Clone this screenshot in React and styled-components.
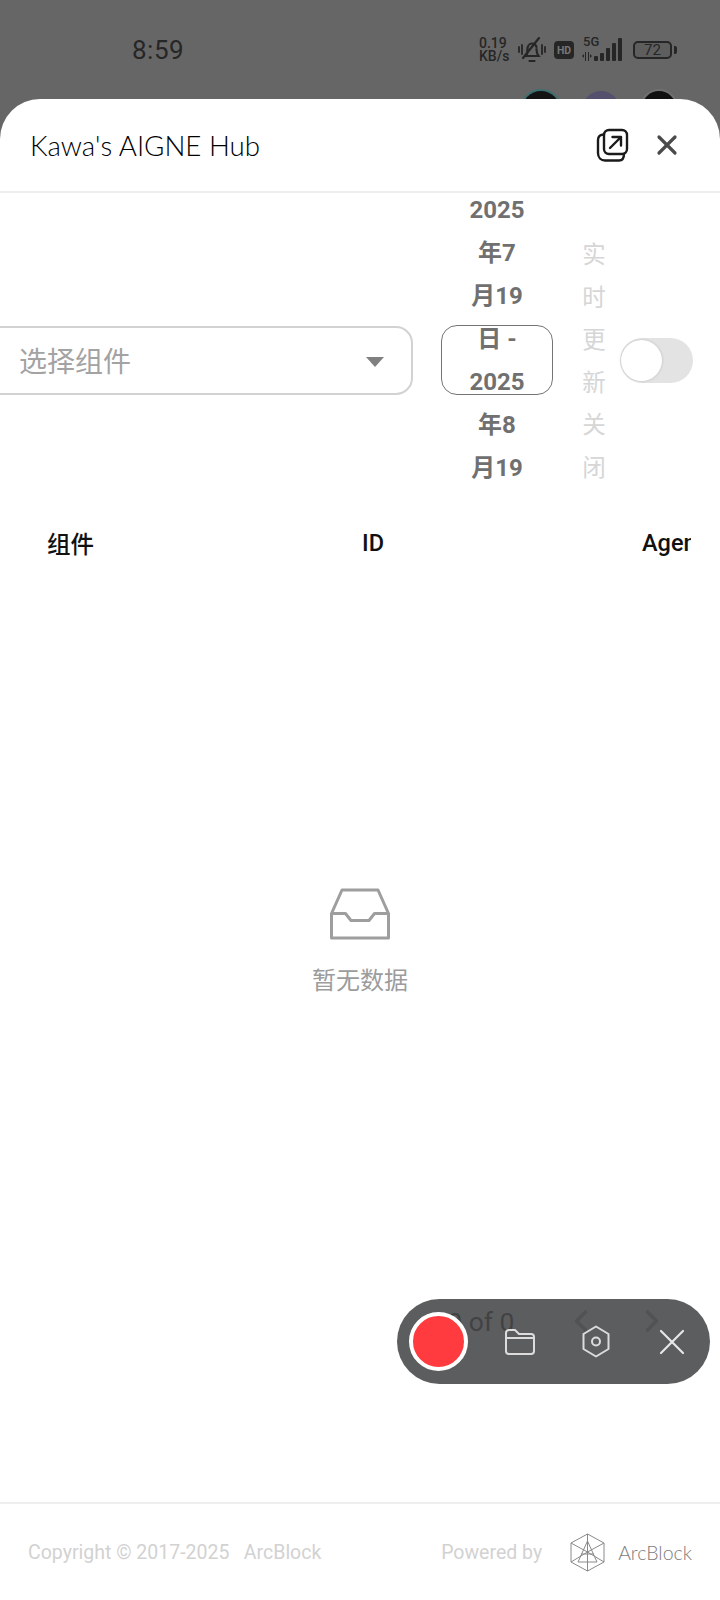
import React from 'react';
import styled, { createGlobalStyle } from 'styled-components';
import { X, ChevronLeft, ChevronRight } from 'lucide-react';

const GlobalStyle = createGlobalStyle`
  html, body {
    margin: 0;
    padding: 0;
    background: #666;
  }
  body {
    font-family: Roboto, "Noto Sans CJK SC", sans-serif;
  }
`;

const Page = styled.div`
  position: relative;
  width: 720px;
  height: 1600px;
  overflow: hidden;
  display: flex;
  flex-direction: column;
`;

/* dimmed phone status area behind the sheet */
const Backdrop = styled.div`
  height: 99px;
  flex: none;
  background: #666;
  overflow: hidden;
  display: flex;
  flex-direction: column;
`;

const StatusBar = styled.div`
  flex: none;
  display: flex;
  align-items: center;
  justify-content: space-between;
  height: 50px;
  margin-top: 25px;
  padding: 0 43px 0 132px;
  color: #222;
`;

const Clock = styled.span`
  font-size: 26px;
  letter-spacing: 0.5px;
  color: #262626;
`;

const StatusIcons = styled.div`
  display: flex;
  align-items: center;
`;

const NetSpeed = styled.div`
  display: flex;
  flex-direction: column;
  align-items: flex-start;
  font-size: 14px;
  font-weight: 500;
  line-height: 13px;
  width: 39px;
  color: #262626;
`;

const HdBadge = styled.span`
  display: flex;
  align-items: center;
  justify-content: center;
  width: 20px;
  height: 18px;
  margin: 0 8px;
  border-radius: 4px;
  background: #262626;
  color: #777;
  font-size: 10.5px;
  font-weight: 700;
`;

const SignalBox = styled.div`
  position: relative;
  width: 41px;
  height: 24px;
`;

const FiveG = styled.span`
  position: absolute;
  left: 1px;
  top: -3px;
  font-size: 13px;
  font-weight: 500;
  line-height: 14px;
  color: #262626;
`;

const Battery = styled.div`
  display: flex;
  align-items: center;
  justify-content: center;
  width: 39px;
  height: 18px;
  margin-left: 10px;
  box-sizing: border-box;
  border: 2px solid #262626;
  border-radius: 5px;
  background: #5e5e5e;
  font-size: 15px;
  color: #262626;
`;

const BatteryCap = styled.span`
  width: 3px;
  height: 8px;
  margin-left: 2px;
  border-radius: 0 2px 2px 0;
  background: #262626;
`;

const AvatarRow = styled.div`
  display: flex;
  gap: 22px;
  padding-left: 522px;
  margin-top: 16px;
`;

const Avatar = styled.span`
  flex: none;
  width: ${(p) => p.$size}px;
  height: ${(p) => p.$size}px;
  border-radius: 50%;
  background: ${(p) => p.$color};
  box-shadow: 0 0 0 2px ${(p) => p.$ring};
`;

const Sheet = styled.div`
  flex: 1;
  display: flex;
  flex-direction: column;
  min-height: 0;
  background: #fff;
  border-radius: 40px 40px 0 0;
  overflow: hidden;
`;

const SheetHeader = styled.header`
  flex: none;
  height: 94px;
  display: flex;
  align-items: center;
  padding: 0 37px 0 30px;
  border-bottom: 2px solid #eeeeee;
  box-sizing: border-box;
`;

const SheetTitle = styled.h1`
  flex: 1;
  margin: 0;
  font-family: Lato, sans-serif;
  font-size: 27.7px;
  font-weight: 300;
  color: #000;
`;

const IconButton = styled.span`
  display: flex;
  margin: 0 0 1px ${(p) => p.$gap || 0}px;
  color: ${(p) => p.$color || '#1a1a1a'};
`;

const FilterRow = styled.div`
  flex: none;
  height: 327px;
  display: flex;
  align-items: center;
  padding-top: 7px;
  box-sizing: border-box;
`;

const ComponentSelect = styled.div`
  flex: none;
  width: 433px;
  height: 69px;
  margin-left: -20px;
  padding: 0 27px 0 37px;
  box-sizing: border-box;
  display: flex;
  align-items: center;
  justify-content: space-between;
  border: 2px solid #d2d2d2;
  border-radius: 17px;
  font-size: 28px;
  color: #a3a3a3;
`;

const SelectCaret = styled.span`
  width: 0;
  height: 0;
  margin-top: 3px;
  border-left: 9px solid transparent;
  border-right: 9px solid transparent;
  border-top: 10px solid #808080;
`;

const DateRange = styled.div`
  flex: none;
  width: 112px;
  height: 70px;
  margin-left: 28px;
  box-sizing: border-box;
  display: flex;
  align-items: center;
  justify-content: center;
  border: 1.5px solid #747474;
  border-radius: 16px;
  font-size: 24px;
  font-weight: 700;
  line-height: 42.9px;
  text-align: center;
  color: #707070;
`;

/* narrow cell: the range wraps and spills past the outlined box */
const DateText = styled.div`
  flex: none;
  width: 58px;
  padding-bottom: 41px;
`;

const LiveLabel = styled.div`
  flex: none;
  width: 24px;
  margin-left: 29px;
  padding-top: 3px;
  font-size: 23.5px;
  line-height: 42.5px;
  text-align: center;
  color: #d6d6d6;
`;

const Toggle = styled.span`
  flex: none;
  width: 73px;
  height: 45px;
  margin-left: 14px;
  border-radius: 23px;
  background: #e3e3e3;
  display: flex;
  align-items: center;
`;

const ToggleKnob = styled.span`
  width: 41px;
  height: 41px;
  margin-left: 1px;
  border-radius: 50%;
  background: #fff;
  box-shadow: 0 0 3px rgba(0, 0, 0, 0.18);
`;

const TableHead = styled.div`
  flex: none;
  width: 691px;
  height: 46px;
  overflow: hidden;
  display: grid;
  grid-template-columns: 315px 280px 98px;
  align-items: center;
  padding-left: 47px;
  box-sizing: border-box;
  font-size: 23.5px;
  font-weight: 500;
  color: #111;
`;

const HeadCell = styled.span`
  white-space: nowrap;
`;

const EmptyState = styled.div`
  flex: none;
  height: 725px;
  box-sizing: border-box;
  padding-top: 322px;
  display: flex;
  flex-direction: column;
  align-items: center;
  font-size: 24px;
  color: #9c9c9c;
`;

const EmptyText = styled.span`
  margin-top: 23px;
  line-height: 36px;
`;

const Pagination = styled.div`
  flex: none;
  height: 60px;
  display: flex;
  align-items: center;
  padding-left: 425px;
  font-size: 26.5px;
  color: #222;
`;

const PageInfo = styled.span`
  width: 138px;
`;

const PageArrow = styled.span`
  display: flex;
  width: 71px;
  color: #a0a0a0;
`;

const Footer = styled.footer`
  flex: none;
  margin-top: auto;
  height: 98px;
  box-sizing: border-box;
  display: flex;
  align-items: center;
  padding: 0 28px;
  border-top: 2px solid #eeeeee;
  font-size: 19.5px;
  color: #d2d2d2;
`;

const Copyright = styled.span`
  flex: 1;
  white-space: pre;
`;

const Brand = styled.div`
  display: flex;
  align-items: center;
  margin-left: 28px;
  color: #7c7c7c;
  font-family: Lato, sans-serif;
  font-size: 19.5px;
  font-weight: 300;
`;

const BrandName = styled.span`
  margin-left: 13px;
`;

/* floating screen recorder controls */
const RecorderPill = styled.div`
  position: absolute;
  left: 397px;
  top: 1299px;
  width: 313px;
  height: 85px;
  display: flex;
  align-items: center;
  border-radius: 43px;
  background: rgba(70, 71, 72, 0.88);
  color: #e8e8e8;
`;

const RecordButton = styled.span`
  flex: none;
  width: 51px;
  height: 51px;
  margin-left: 12px;
  border: 4px solid #fff;
  border-radius: 50%;
  background: #ff3b3f;
`;

const RecorderIcon = styled.span`
  flex: none;
  display: flex;
  margin-left: ${(p) => p.$gap}px;
`;

function MutedBell() {
  return (
    <svg width="28" height="26" viewBox="0 0 28 26" fill="none" stroke="#262626" strokeWidth="2.2" strokeLinecap="round">
      <path d="M1 10v5M4 8v9M27 10v5M24 8v9" strokeWidth="1.8" />
      <path d="M8 19c1.500-2 1.500-4 1.500-7 0-3 2-5.500 4.500-5.500s4 1.500 4.500 3.500M18.500 12c0 3 .5 5 2 7H7" />
      <path d="M11.500 24h5" />
      <path d="M5 21L21 1" />
    </svg>
  );
}

function SignalBars() {
  return (
    <svg width="41" height="24" viewBox="0 0 41 24" fill="#262626" style={{ display: 'block' }}>
      <path d="M2 16l-2 2 2 2zM3 14h1v9H3zM6 14h1v9H6zM8 16l2 2-2 2z" />
      <rect x="12" y="18" width="4" height="5" rx="1" />
      <rect x="18" y="15" width="4" height="8" rx="1" />
      <rect x="24" y="10" width="4" height="13" rx="1" />
      <rect x="30" y="5" width="4" height="18" rx="1" />
      <rect x="36" y="0" width="4" height="23" rx="1" />
    </svg>
  );
}

function OpenExternal() {
  return (
    <svg width="34" height="34" viewBox="0 0 34 34" fill="none" stroke="#1a1a1a" strokeWidth="2.4" strokeLinecap="round" strokeLinejoin="round">
      <rect x="9" y="2" width="23" height="24" rx="5" />
      <path d="M9 6.500C5 6.500 3 8.500 3 12v13c0 4.500 3 7.500 7 7.500h14c3 0 5-2 5-6.500" />
      <path d="M15 20l11-11M17.500 9H26v8.500" />
    </svg>
  );
}

function InboxIcon() {
  return (
    <svg width="60" height="52" viewBox="0 0 60 52" fill="none" stroke="#9e9e9e" strokeWidth="3" strokeLinejoin="round">
      <path d="M1.500 25.500L12 2h36l10.500 23.500V50h-57z" />
      <path d="M1.500 25.500h14l5.500 7h18l5.500-7h14" />
    </svg>
  );
}

function FolderIcon() {
  return (
    <svg width="30" height="28" viewBox="0 0 30 28" fill="none" stroke="#dcdcdc" strokeWidth="2" strokeLinejoin="round">
      <path d="M1 5a3 3 0 0 1 3-3h6l4 4h12a3 3 0 0 1 3 3v14a3 3 0 0 1-3 3H4a3 3 0 0 1-3-3z" />
      <path d="M1 10h28" />
    </svg>
  );
}

function HexIcon() {
  return (
    <svg width="28" height="33" viewBox="0 0 28 33" fill="none" stroke="#dcdcdc" strokeWidth="2" strokeLinejoin="round">
      <path d="M14 1.500l12.500 7.500v15L14 31.500 1.500 24V9z" />
      <circle cx="14" cy="16.500" r="4" />
    </svg>
  );
}

function ArcBlockMark() {
  return (
    <svg width="35" height="39" viewBox="0 0 35 39" fill="none" stroke="#8a8a8a" strokeWidth="1">
      <path d="M17.500 1L34 10v19l-16.500 9L1 29V10z" />
      <path d="M1 10l16.500 9L34 10M1 29l16.500-10L34 29M17.500 1v37" />
      <path d="M17.500 8L27 29H8zM11 21h13" />
    </svg>
  );
}

export default function App() {
  return (
    <Page>
      <GlobalStyle />
      <Backdrop>
        <StatusBar>
          <Clock>8:59</Clock>
          <StatusIcons>
            <NetSpeed>
              <span>0.19</span>
              <span>KB/s</span>
            </NetSpeed>
            <MutedBell />
            <HdBadge>HD</HdBadge>
            <SignalBox>
              <FiveG>5G</FiveG>
              <SignalBars />
            </SignalBox>
            <Battery>72</Battery>
            <BatteryCap />
          </StatusIcons>
        </StatusBar>
        <AvatarRow>
          <Avatar $size={38} $color="#141414" $ring="#3d6f70" />
          <Avatar $size={38} $color="#56506f" $ring="#666" />
          <Avatar $size={34} $color="#111" $ring="#707070" />
        </AvatarRow>
      </Backdrop>

      <Sheet>
        <SheetHeader>
          <SheetTitle>Kawa's AIGNE Hub</SheetTitle>
          <IconButton><OpenExternal /></IconButton>
          <IconButton $gap={22} $color="#4a4a4a"><X size={32} strokeWidth={2.4} /></IconButton>
        </SheetHeader>

        <FilterRow>
          <ComponentSelect>
            选择组件
            <SelectCaret />
          </ComponentSelect>
          <DateRange>
            <DateText>2025年7月19日 - 2025年8月19</DateText>
          </DateRange>
          <LiveLabel>实时更新关闭</LiveLabel>
          <Toggle><ToggleKnob /></Toggle>
        </FilterRow>

        <TableHead>
          <HeadCell>组件</HeadCell>
          <HeadCell>ID</HeadCell>
          <HeadCell>Agent</HeadCell>
        </TableHead>

        <EmptyState>
          <InboxIcon />
          <EmptyText>暂无数据</EmptyText>
        </EmptyState>

        <Pagination>
          <PageInfo>0-0 of 0</PageInfo>
          <PageArrow><ChevronLeft size={36} strokeWidth={2.4} /></PageArrow>
          <PageArrow><ChevronRight size={36} strokeWidth={2.4} /></PageArrow>
        </Pagination>

        <Footer>
          <Copyright>Copyright © 2017-2025   ArcBlock</Copyright>
          <span>Powered by</span>
          <Brand>
            <ArcBlockMark />
            <BrandName>ArcBlock</BrandName>
          </Brand>
        </Footer>
      </Sheet>

      <RecorderPill>
        <RecordButton />
        <RecorderIcon $gap={37}><FolderIcon /></RecorderIcon>
        <RecorderIcon $gap={47}><HexIcon /></RecorderIcon>
        <RecorderIcon $gap={40}><X size={44} strokeWidth={1.2} /></RecorderIcon>
      </RecorderPill>
    </Page>
  );
}
